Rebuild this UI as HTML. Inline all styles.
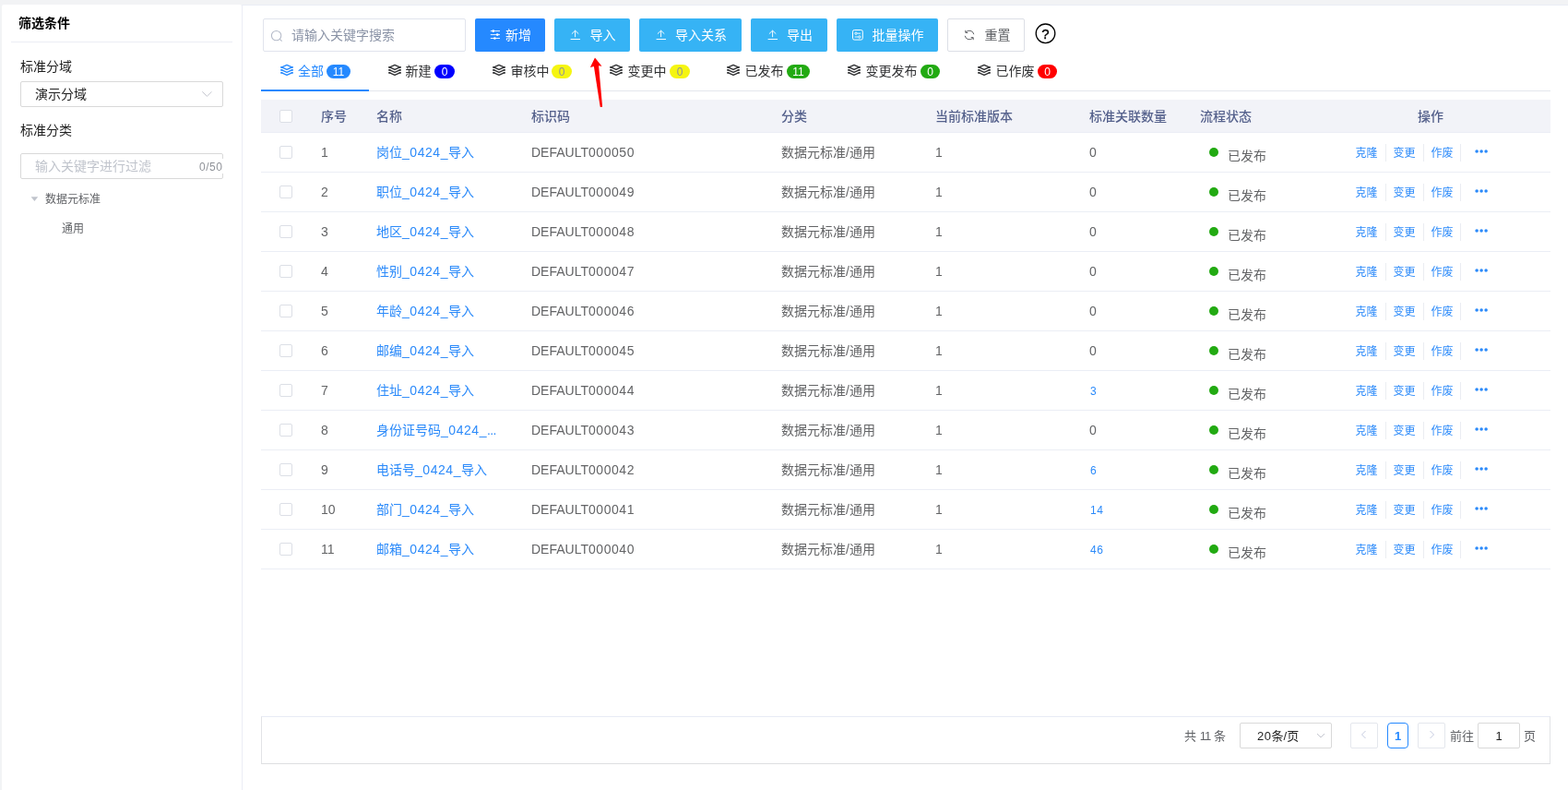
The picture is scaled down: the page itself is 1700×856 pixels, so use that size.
<!DOCTYPE html>
<html lang="zh-CN">
<head>
<meta charset="utf-8">
<title>数据元标准</title>
<style>
*{box-sizing:border-box;margin:0;padding:0}
html,body{width:1700px;height:856px;overflow:hidden;background:#f2f3f5}
body{font-family:"Liberation Sans","Noto Sans CJK SC",sans-serif;font-size:14px;color:#636466;position:relative}
#wrap{position:absolute;left:0;top:0;width:1700px;height:856px;will-change:transform}
.abs{position:absolute}
#left{position:absolute;left:2px;top:5px;width:260px;height:851px;background:#fff;border-radius:2px 2px 0 0}
#main{position:absolute;left:262px;top:5px;width:1438px;height:851px;background:#fff;border-left:1px solid #ebedf5;border-top:1px solid #ebedf5}
.t{position:absolute;white-space:nowrap;line-height:20px}
.d{letter-spacing:.55px}
.btn{position:absolute;top:20px;height:36px;border-radius:2px;color:#fff;font-size:14px;line-height:36px;white-space:nowrap}
.btn .lb{position:absolute;top:0;line-height:36px}
.btn svg{position:absolute}
.b1{background:#2589ff}
.b2{background:#36b3f5}
.b3{background:#fff;border:1px solid #dcdfe6;color:#606266}
.tab{position:absolute;top:67px;line-height:20px;font-size:14px;color:#303133;white-space:nowrap}
.tab.on{color:#2589ff}
.bdg{position:absolute;top:70px;height:15px;border-radius:8px;color:#fff;font-size:12px;line-height:17px;text-align:center;white-space:nowrap}
.lay{position:absolute}
#tbl{position:absolute;left:283px;top:108px;width:1398px}
#th{position:relative;height:36px;background:#f2f3f8;border-bottom:1px solid #ebeef5;color:#55618c;font-weight:500}
.tr{position:relative;height:43px;border-bottom:1px solid #ebeef5;background:#fff}
.c{position:absolute;top:0;line-height:42px;white-space:nowrap;font-size:14px}
#th .c{top:1px;line-height:35px}
.cb{position:absolute;left:20px;width:14px;height:14px;border:1px solid #dcdfe6;border-radius:2px;background:#fff}
.lk{color:#2b8afa}
.sm{font-size:12px}
.dot{position:absolute;left:1028px;top:16px;width:10px;height:10px;border-radius:50%;background:#22aa12}
.dv{position:absolute;top:12px;width:1px;height:19px;background:#ebedf2}
.a{top:1px;margin-left:-.5px}
</style>
</head>
<body>
<div id="wrap">
<div id="left"></div>
<div id="main"></div>
<!--LEFT-->
<div class="t" style="left:20px;top:15px;font-weight:bold;color:#000;font-size:14px">筛选条件</div>
<div class="abs" style="left:12px;top:45px;width:240px;height:1px;background:#ebedf5"></div>
<div class="t" style="left:22px;top:62px;color:#1f1f1f">标准分域</div>
<div class="abs" style="left:22px;top:88px;width:220px;height:28px;border:1px solid #d9d9d9;border-radius:2px;background:#fff"></div>
<div class="t" style="left:38px;top:92px;color:#1f1f1f">演示分域</div>
<svg class="abs" style="left:218px;top:97px" width="13" height="10" viewBox="0 0 13 10"><path d="M1.3 2.3 L6.4 7.3 L11.5 2.3" fill="none" stroke="#c4c6cf" stroke-width="1"/></svg>
<div class="t" style="left:22px;top:131px;color:#1f1f1f">标准分类</div>
<div class="abs" style="left:22px;top:166px;width:220px;height:28px;border:1px solid #d9d9d9;border-radius:2px;background:#fff"></div>
<div class="t" style="left:38px;top:170px;color:#c0c4cc">输入关键字进行过滤</div>
<div class="t" style="left:214px;top:172px;width:28px;height:16px;padding-left:2px;line-height:18px;background:#fff;color:#909399;font-size:12px;letter-spacing:.55px;overflow:hidden">0/50</div>
<svg class="abs" style="left:33px;top:213px" width="9" height="6" viewBox="0 0 9 6"><path d="M0.6 0.3 L8.2 0.3 L4.4 5 Z" fill="#c0c4cc"/></svg>
<div class="t" style="left:49px;top:206px;color:#606266;font-size:12px">数据元标准</div>
<div class="t" style="left:67px;top:238px;color:#606266;font-size:12px">通用</div>

<!--TOOLBAR-->
<div class="abs" style="left:285px;top:20px;width:220px;height:36px;border:1px solid #e1e4ed;border-radius:2px;background:#fff"></div>
<svg class="abs" style="left:293px;top:31.6px" width="14" height="14" viewBox="0 0 14 14"><circle cx="6.6" cy="6.6" r="5.2" fill="none" stroke="#b4bac8" stroke-width="1.05"/><path d="M10.4 10.4 L12.6 12.6" stroke="#b4bac8" stroke-width="1.05" fill="none"/></svg>
<div class="t" style="left:316px;top:28px;color:#8a93a6">请输入关键字搜索</div>
<div class="btn b1" style="left:515px;width:76px"><svg style="left:16px;top:11px" width="12" height="14" viewBox="0 0 12 14"><g stroke="#fff" stroke-width="0.9" fill="none"><path d="M0.8 2.6H11M0.8 6.6H11M0.8 10.5H11"/></g><g fill="#fff"><circle cx="3.8" cy="2.6" r="1.3"/><circle cx="8.2" cy="6.6" r="1.3"/><circle cx="5.4" cy="10.5" r="1.3"/></g></svg><span class="lb" style="left:33px">新增</span></div>
<div class="btn b2" style="left:601px;width:82px"><svg style="left:17px;top:12px" width="12" height="12" viewBox="0 0 12 12"><path d="M5.6 8.2V1.3M1.9 4.7L5.6 1.1L9.3 4.7M0.6 10.5H11" stroke="#fff" stroke-width="0.95" fill="none"/></svg><span class="lb" style="left:38.4px">导入</span></div>
<div class="btn b2" style="left:693px;width:111px"><svg style="left:18px;top:12px" width="12" height="12" viewBox="0 0 12 12"><path d="M5.6 8.2V1.3M1.9 4.7L5.6 1.1L9.3 4.7M0.6 10.5H11" stroke="#fff" stroke-width="0.95" fill="none"/></svg><span class="lb" style="left:39px">导入关系</span></div>
<div class="btn b2" style="left:814px;width:83px"><svg style="left:18px;top:12px" width="12" height="12" viewBox="0 0 12 12"><path d="M5.6 8.2V1.3M1.9 4.7L5.6 1.1L9.3 4.7M0.6 10.5H11" stroke="#fff" stroke-width="0.95" fill="none"/></svg><span class="lb" style="left:39px">导出</span></div>
<div class="btn b2" style="left:907px;width:110px"><svg style="left:17px;top:12px" width="12" height="12" viewBox="0 0 12 12"><rect x="0.5" y="0.5" width="10.8" height="10.6" rx="1.8" fill="none" stroke="#fff" stroke-width="1"/><circle cx="4" cy="4.2" r="1.2" fill="none" stroke="#fff" stroke-width="0.9"/><path d="M5.4 4.2h3.6M2.6 8h3.6" stroke="#fff" stroke-width="0.9"/><circle cx="7.8" cy="8" r="1.2" fill="none" stroke="#fff" stroke-width="0.9"/></svg><span class="lb" style="left:38.4px">批量操作</span></div>
<div class="btn b3" style="left:1027px;width:84px"><svg style="left:17px;top:10.8px" width="12" height="12" viewBox="0 0 12 12"><g transform="translate(12,0) scale(-1,1)"><path d="M1.2 5.2A4.9 4.9 0 0 1 10 3.2M10.8 6.8A4.9 4.9 0 0 1 2 8.8" stroke="#606266" stroke-width="1" fill="none"/><path d="M10.2 0.8V3.4H7.6M1.8 11.2V8.6H4.4" stroke="#606266" stroke-width="1" fill="none"/></g></svg><span class="lb" style="left:39.5px;line-height:34px">重置</span></div>
<svg class="abs" style="left:1121px;top:24px" width="25" height="25" viewBox="0 0 25 25"><circle cx="12.5" cy="12.3" r="10.3" fill="#fff" stroke="#000" stroke-width="1.3"/><text x="12.5" y="17.8" text-anchor="middle" font-family="Liberation Sans, sans-serif" font-size="15" fill="#000" stroke="#000" stroke-width="0.35">?</text></svg>

<!--TABS-->
<div class="abs" style="left:283px;top:98px;width:1398px;height:1px;background:#e4e7ed"></div>
<div class="abs" style="left:283px;top:97px;width:117px;height:2px;background:#2589ff"></div>
<svg class="lay" style="left:304px;top:69.3px" width="14" height="14" viewBox="0 0 14 14"><g fill="none" stroke="#2589ff" stroke-linejoin="round"><path stroke-width="1.3" d="M1.5 3.9L7 1.3L12.5 3.9L7 6.3ZM1.5 6.9L7 9.3L12.5 6.9M1.5 9.9L7 12.4L12.5 9.9"/><path stroke-width="1.7" d="M0.2 3.9H2.3M11.7 3.9H13.8M0.2 6.9H2.3M11.7 6.9H13.8M0.2 9.9H2.3M11.7 9.9H13.8"/></g></svg>
<div class="tab on" style="left:323px">全部</div><div class="bdg" style="left:354px;width:26px;background:#2589ff;color:#fff">11</div>
<svg class="lay" style="left:421px;top:69.3px" width="14" height="14" viewBox="0 0 14 14"><g fill="none" stroke="#303133" stroke-linejoin="round"><path stroke-width="1.3" d="M1.5 3.9L7 1.3L12.5 3.9L7 6.3ZM1.5 6.9L7 9.3L12.5 6.9M1.5 9.9L7 12.4L12.5 9.9"/><path stroke-width="1.7" d="M0.2 3.9H2.3M11.7 3.9H13.8M0.2 6.9H2.3M11.7 6.9H13.8M0.2 9.9H2.3M11.7 9.9H13.8"/></g></svg>
<div class="tab" style="left:439.4px">新建</div><div class="bdg" style="left:471px;width:22px;background:#0000ff;color:#fff">0</div>
<svg class="lay" style="left:534px;top:69.3px" width="14" height="14" viewBox="0 0 14 14"><g fill="none" stroke="#303133" stroke-linejoin="round"><path stroke-width="1.3" d="M1.5 3.9L7 1.3L12.5 3.9L7 6.3ZM1.5 6.9L7 9.3L12.5 6.9M1.5 9.9L7 12.4L12.5 9.9"/><path stroke-width="1.7" d="M0.2 3.9H2.3M11.7 3.9H13.8M0.2 6.9H2.3M11.7 6.9H13.8M0.2 9.9H2.3M11.7 9.9H13.8"/></g></svg>
<div class="tab" style="left:553.4px">审核中</div><div class="bdg" style="left:598px;width:22px;background:#f5f511;color:#909399">0</div>
<svg class="lay" style="left:661px;top:69.3px" width="14" height="14" viewBox="0 0 14 14"><g fill="none" stroke="#303133" stroke-linejoin="round"><path stroke-width="1.3" d="M1.5 3.9L7 1.3L12.5 3.9L7 6.3ZM1.5 6.9L7 9.3L12.5 6.9M1.5 9.9L7 12.4L12.5 9.9"/><path stroke-width="1.7" d="M0.2 3.9H2.3M11.7 3.9H13.8M0.2 6.9H2.3M11.7 6.9H13.8M0.2 9.9H2.3M11.7 9.9H13.8"/></g></svg>
<div class="tab" style="left:680.4px">变更中</div><div class="bdg" style="left:726px;width:22px;background:#f5f511;color:#909399">0</div>
<svg class="lay" style="left:788px;top:69.3px" width="14" height="14" viewBox="0 0 14 14"><g fill="none" stroke="#303133" stroke-linejoin="round"><path stroke-width="1.3" d="M1.5 3.9L7 1.3L12.5 3.9L7 6.3ZM1.5 6.9L7 9.3L12.5 6.9M1.5 9.9L7 12.4L12.5 9.9"/><path stroke-width="1.7" d="M0.2 3.9H2.3M11.7 3.9H13.8M0.2 6.9H2.3M11.7 6.9H13.8M0.2 9.9H2.3M11.7 9.9H13.8"/></g></svg>
<div class="tab" style="left:807.4px">已发布</div><div class="bdg" style="left:853px;width:25px;background:#22aa12;color:#fff">11</div>
<svg class="lay" style="left:919px;top:69.3px" width="14" height="14" viewBox="0 0 14 14"><g fill="none" stroke="#303133" stroke-linejoin="round"><path stroke-width="1.3" d="M1.5 3.9L7 1.3L12.5 3.9L7 6.3ZM1.5 6.9L7 9.3L12.5 6.9M1.5 9.9L7 12.4L12.5 9.9"/><path stroke-width="1.7" d="M0.2 3.9H2.3M11.7 3.9H13.8M0.2 6.9H2.3M11.7 6.9H13.8M0.2 9.9H2.3M11.7 9.9H13.8"/></g></svg>
<div class="tab" style="left:938.4px">变更发布</div><div class="bdg" style="left:998px;width:21px;background:#22aa12;color:#fff">0</div>
<svg class="lay" style="left:1060px;top:69.3px" width="14" height="14" viewBox="0 0 14 14"><g fill="none" stroke="#303133" stroke-linejoin="round"><path stroke-width="1.3" d="M1.5 3.9L7 1.3L12.5 3.9L7 6.3ZM1.5 6.9L7 9.3L12.5 6.9M1.5 9.9L7 12.4L12.5 9.9"/><path stroke-width="1.7" d="M0.2 3.9H2.3M11.7 3.9H13.8M0.2 6.9H2.3M11.7 6.9H13.8M0.2 9.9H2.3M11.7 9.9H13.8"/></g></svg>
<div class="tab" style="left:1079.4px">已作废</div><div class="bdg" style="left:1125px;width:21px;background:#ff0000;color:#fff">0</div>

<!--TABLE-->
<div id="tbl">
<div id="th"><span class="cb" style="top:11px"></span><span class="c" style="left:65px">序号</span><span class="c" style="left:125px">名称</span><span class="c" style="left:293px">标识码</span><span class="c" style="left:564px">分类</span><span class="c" style="left:731px">当前标准版本</span><span class="c" style="left:898px">标准关联数量</span><span class="c" style="left:1018px">流程状态</span><span class="c" style="left:1254px">操作</span></div>
<div class="tr"><span class="cb" style="top:14px"></span><span class="c" style="left:65px">1</span><span class="c lk" style="left:125px">岗位<span class="d">_0424_</span>导入</span><span class="c" style="left:293px">DEFAULT<span class="d">000050</span></span><span class="c" style="left:564px">数据元标准/通用</span><span class="c" style="left:731px">1</span><span class="c" style="left:898px">0</span><i class="dot"></i><span class="c" style="left:1048px;top:4px">已发布</span><span class="c lk sm a" style="left:1187px">克隆</span><i class="dv" style="left:1219px"></i><span class="c lk sm a" style="left:1228px">变更</span><i class="dv" style="left:1260px"></i><span class="c lk sm a" style="left:1269px">作废</span><i class="dv" style="left:1300px"></i><svg class="abs" style="left:1315px;top:17.3px" width="16" height="6" viewBox="0 0 16 6"><g fill="#2b8afa"><circle cx="3.1" cy="3" r="1.8"/><circle cx="8.1" cy="3" r="1.8"/><circle cx="13.1" cy="3" r="1.8"/></g></svg></div>
<div class="tr"><span class="cb" style="top:14px"></span><span class="c" style="left:65px">2</span><span class="c lk" style="left:125px">职位<span class="d">_0424_</span>导入</span><span class="c" style="left:293px">DEFAULT<span class="d">000049</span></span><span class="c" style="left:564px">数据元标准/通用</span><span class="c" style="left:731px">1</span><span class="c" style="left:898px">0</span><i class="dot"></i><span class="c" style="left:1048px;top:4px">已发布</span><span class="c lk sm a" style="left:1187px">克隆</span><i class="dv" style="left:1219px"></i><span class="c lk sm a" style="left:1228px">变更</span><i class="dv" style="left:1260px"></i><span class="c lk sm a" style="left:1269px">作废</span><i class="dv" style="left:1300px"></i><svg class="abs" style="left:1315px;top:17.3px" width="16" height="6" viewBox="0 0 16 6"><g fill="#2b8afa"><circle cx="3.1" cy="3" r="1.8"/><circle cx="8.1" cy="3" r="1.8"/><circle cx="13.1" cy="3" r="1.8"/></g></svg></div>
<div class="tr"><span class="cb" style="top:14px"></span><span class="c" style="left:65px">3</span><span class="c lk" style="left:125px">地区<span class="d">_0424_</span>导入</span><span class="c" style="left:293px">DEFAULT<span class="d">000048</span></span><span class="c" style="left:564px">数据元标准/通用</span><span class="c" style="left:731px">1</span><span class="c" style="left:898px">0</span><i class="dot"></i><span class="c" style="left:1048px;top:4px">已发布</span><span class="c lk sm a" style="left:1187px">克隆</span><i class="dv" style="left:1219px"></i><span class="c lk sm a" style="left:1228px">变更</span><i class="dv" style="left:1260px"></i><span class="c lk sm a" style="left:1269px">作废</span><i class="dv" style="left:1300px"></i><svg class="abs" style="left:1315px;top:17.3px" width="16" height="6" viewBox="0 0 16 6"><g fill="#2b8afa"><circle cx="3.1" cy="3" r="1.8"/><circle cx="8.1" cy="3" r="1.8"/><circle cx="13.1" cy="3" r="1.8"/></g></svg></div>
<div class="tr"><span class="cb" style="top:14px"></span><span class="c" style="left:65px">4</span><span class="c lk" style="left:125px">性别<span class="d">_0424_</span>导入</span><span class="c" style="left:293px">DEFAULT<span class="d">000047</span></span><span class="c" style="left:564px">数据元标准/通用</span><span class="c" style="left:731px">1</span><span class="c" style="left:898px">0</span><i class="dot"></i><span class="c" style="left:1048px;top:4px">已发布</span><span class="c lk sm a" style="left:1187px">克隆</span><i class="dv" style="left:1219px"></i><span class="c lk sm a" style="left:1228px">变更</span><i class="dv" style="left:1260px"></i><span class="c lk sm a" style="left:1269px">作废</span><i class="dv" style="left:1300px"></i><svg class="abs" style="left:1315px;top:17.3px" width="16" height="6" viewBox="0 0 16 6"><g fill="#2b8afa"><circle cx="3.1" cy="3" r="1.8"/><circle cx="8.1" cy="3" r="1.8"/><circle cx="13.1" cy="3" r="1.8"/></g></svg></div>
<div class="tr"><span class="cb" style="top:14px"></span><span class="c" style="left:65px">5</span><span class="c lk" style="left:125px">年龄<span class="d">_0424_</span>导入</span><span class="c" style="left:293px">DEFAULT<span class="d">000046</span></span><span class="c" style="left:564px">数据元标准/通用</span><span class="c" style="left:731px">1</span><span class="c" style="left:898px">0</span><i class="dot"></i><span class="c" style="left:1048px;top:4px">已发布</span><span class="c lk sm a" style="left:1187px">克隆</span><i class="dv" style="left:1219px"></i><span class="c lk sm a" style="left:1228px">变更</span><i class="dv" style="left:1260px"></i><span class="c lk sm a" style="left:1269px">作废</span><i class="dv" style="left:1300px"></i><svg class="abs" style="left:1315px;top:17.3px" width="16" height="6" viewBox="0 0 16 6"><g fill="#2b8afa"><circle cx="3.1" cy="3" r="1.8"/><circle cx="8.1" cy="3" r="1.8"/><circle cx="13.1" cy="3" r="1.8"/></g></svg></div>
<div class="tr"><span class="cb" style="top:14px"></span><span class="c" style="left:65px">6</span><span class="c lk" style="left:125px">邮编<span class="d">_0424_</span>导入</span><span class="c" style="left:293px">DEFAULT<span class="d">000045</span></span><span class="c" style="left:564px">数据元标准/通用</span><span class="c" style="left:731px">1</span><span class="c" style="left:898px">0</span><i class="dot"></i><span class="c" style="left:1048px;top:4px">已发布</span><span class="c lk sm a" style="left:1187px">克隆</span><i class="dv" style="left:1219px"></i><span class="c lk sm a" style="left:1228px">变更</span><i class="dv" style="left:1260px"></i><span class="c lk sm a" style="left:1269px">作废</span><i class="dv" style="left:1300px"></i><svg class="abs" style="left:1315px;top:17.3px" width="16" height="6" viewBox="0 0 16 6"><g fill="#2b8afa"><circle cx="3.1" cy="3" r="1.8"/><circle cx="8.1" cy="3" r="1.8"/><circle cx="13.1" cy="3" r="1.8"/></g></svg></div>
<div class="tr"><span class="cb" style="top:14px"></span><span class="c" style="left:65px">7</span><span class="c lk" style="left:125px">住址<span class="d">_0424_</span>导入</span><span class="c" style="left:293px">DEFAULT<span class="d">000044</span></span><span class="c" style="left:564px">数据元标准/通用</span><span class="c" style="left:731px">1</span><span class="c lk sm d" style="left:899px;top:1px">3</span><i class="dot"></i><span class="c" style="left:1048px;top:4px">已发布</span><span class="c lk sm a" style="left:1187px">克隆</span><i class="dv" style="left:1219px"></i><span class="c lk sm a" style="left:1228px">变更</span><i class="dv" style="left:1260px"></i><span class="c lk sm a" style="left:1269px">作废</span><i class="dv" style="left:1300px"></i><svg class="abs" style="left:1315px;top:17.3px" width="16" height="6" viewBox="0 0 16 6"><g fill="#2b8afa"><circle cx="3.1" cy="3" r="1.8"/><circle cx="8.1" cy="3" r="1.8"/><circle cx="13.1" cy="3" r="1.8"/></g></svg></div>
<div class="tr"><span class="cb" style="top:14px"></span><span class="c" style="left:65px">8</span><span class="c lk" style="left:125px">身份证号码<span class="d">_0424_</span><span style="letter-spacing:-.6px">...</span></span><span class="c" style="left:293px">DEFAULT<span class="d">000043</span></span><span class="c" style="left:564px">数据元标准/通用</span><span class="c" style="left:731px">1</span><span class="c" style="left:898px">0</span><i class="dot"></i><span class="c" style="left:1048px;top:4px">已发布</span><span class="c lk sm a" style="left:1187px">克隆</span><i class="dv" style="left:1219px"></i><span class="c lk sm a" style="left:1228px">变更</span><i class="dv" style="left:1260px"></i><span class="c lk sm a" style="left:1269px">作废</span><i class="dv" style="left:1300px"></i><svg class="abs" style="left:1315px;top:17.3px" width="16" height="6" viewBox="0 0 16 6"><g fill="#2b8afa"><circle cx="3.1" cy="3" r="1.8"/><circle cx="8.1" cy="3" r="1.8"/><circle cx="13.1" cy="3" r="1.8"/></g></svg></div>
<div class="tr"><span class="cb" style="top:14px"></span><span class="c" style="left:65px">9</span><span class="c lk" style="left:125px">电话号<span class="d">_0424_</span>导入</span><span class="c" style="left:293px">DEFAULT<span class="d">000042</span></span><span class="c" style="left:564px">数据元标准/通用</span><span class="c" style="left:731px">1</span><span class="c lk sm d" style="left:899px;top:1px">6</span><i class="dot"></i><span class="c" style="left:1048px;top:4px">已发布</span><span class="c lk sm a" style="left:1187px">克隆</span><i class="dv" style="left:1219px"></i><span class="c lk sm a" style="left:1228px">变更</span><i class="dv" style="left:1260px"></i><span class="c lk sm a" style="left:1269px">作废</span><i class="dv" style="left:1300px"></i><svg class="abs" style="left:1315px;top:17.3px" width="16" height="6" viewBox="0 0 16 6"><g fill="#2b8afa"><circle cx="3.1" cy="3" r="1.8"/><circle cx="8.1" cy="3" r="1.8"/><circle cx="13.1" cy="3" r="1.8"/></g></svg></div>
<div class="tr"><span class="cb" style="top:14px"></span><span class="c" style="left:65px">10</span><span class="c lk" style="left:125px">部门<span class="d">_0424_</span>导入</span><span class="c" style="left:293px">DEFAULT<span class="d">000041</span></span><span class="c" style="left:564px">数据元标准/通用</span><span class="c" style="left:731px">1</span><span class="c lk sm d" style="left:899px;top:1px">14</span><i class="dot"></i><span class="c" style="left:1048px;top:4px">已发布</span><span class="c lk sm a" style="left:1187px">克隆</span><i class="dv" style="left:1219px"></i><span class="c lk sm a" style="left:1228px">变更</span><i class="dv" style="left:1260px"></i><span class="c lk sm a" style="left:1269px">作废</span><i class="dv" style="left:1300px"></i><svg class="abs" style="left:1315px;top:17.3px" width="16" height="6" viewBox="0 0 16 6"><g fill="#2b8afa"><circle cx="3.1" cy="3" r="1.8"/><circle cx="8.1" cy="3" r="1.8"/><circle cx="13.1" cy="3" r="1.8"/></g></svg></div>
<div class="tr"><span class="cb" style="top:14px"></span><span class="c" style="left:65px">11</span><span class="c lk" style="left:125px">邮箱<span class="d">_0424_</span>导入</span><span class="c" style="left:293px">DEFAULT<span class="d">000040</span></span><span class="c" style="left:564px">数据元标准/通用</span><span class="c" style="left:731px">1</span><span class="c lk sm d" style="left:899px;top:1px">46</span><i class="dot"></i><span class="c" style="left:1048px;top:4px">已发布</span><span class="c lk sm a" style="left:1187px">克隆</span><i class="dv" style="left:1219px"></i><span class="c lk sm a" style="left:1228px">变更</span><i class="dv" style="left:1260px"></i><span class="c lk sm a" style="left:1269px">作废</span><i class="dv" style="left:1300px"></i><svg class="abs" style="left:1315px;top:17.3px" width="16" height="6" viewBox="0 0 16 6"><g fill="#2b8afa"><circle cx="3.1" cy="3" r="1.8"/><circle cx="8.1" cy="3" r="1.8"/><circle cx="13.1" cy="3" r="1.8"/></g></svg></div>
</div>

<!--ARROW--><svg class="abs" style="left:636px;top:58px;z-index:5" width="24" height="62" viewBox="636 58 24 62"><path d="M645 62.4 L639.9 72.9 L643.9 71.9 L650.7 115.7 Q651.9 116.4 653.1 115.5 L649.1 71.3 L652.5 71.8 Z" fill="#ff0000"/></svg>

<!--PAGER-->
<div class="abs" style="left:283px;top:776px;width:1398px;height:52px;border:1px solid #e2e3e6;border-top-color:#e8ebf5;border-bottom-color:#dddee1;background:#fff"></div>
<div class="t" style="left:1284px;top:788px;font-size:13px;color:#606266">共 <span style="letter-spacing:-.9px">11</span> 条</div>
<div class="abs" style="left:1344px;top:783px;width:100px;height:28px;border:1px solid #d9d9d9;border-radius:2px;background:#fff"></div>
<div class="t" style="left:1363px;top:788px;font-size:13px;color:#1f1f1f"><span class="d">20</span>条/页</div>
<svg class="abs" style="left:1425.5px;top:791.6px" width="12" height="10" viewBox="0 0 12 10"><path d="M2 3 L6 7 L10 3" fill="none" stroke="#c4c6cf" stroke-width="1"/></svg>
<div class="abs" style="left:1464px;top:783px;width:30px;height:28px;border:1px solid #e4e7ed;border-radius:2px;background:#fff"></div>
<svg class="abs" style="left:1473px;top:790.3px" width="12" height="12" viewBox="0 0 12 12"><path d="M7.5 2 L3.5 6 L7.5 10" fill="none" stroke="#c5cbe0" stroke-width="1"/></svg>
<div class="abs" style="left:1504px;top:783px;width:23px;height:28px;border:1px solid #2589ff;border-radius:4px;background:#fff"></div>
<div class="t" style="left:1504px;top:788px;width:23px;text-align:center;font-size:13px;font-weight:bold;color:#2589ff">1</div>
<div class="abs" style="left:1537px;top:783px;width:30px;height:28px;border:1px solid #e4e7ed;border-radius:2px;background:#fff"></div>
<svg class="abs" style="left:1546px;top:790.3px" width="12" height="12" viewBox="0 0 12 12"><path d="M4.5 2 L8.5 6 L4.5 10" fill="none" stroke="#c5cbe0" stroke-width="1"/></svg>
<div class="t" style="left:1572px;top:788px;font-size:13px;color:#606266">前往</div>
<div class="abs" style="left:1602px;top:783px;width:46px;height:28px;border:1px solid #d9d9d9;border-radius:2px;background:#fff"></div>
<div class="t" style="left:1602px;top:788px;width:46px;text-align:center;font-size:13px;color:#1f1f1f">1</div>
<div class="t" style="left:1652px;top:788px;font-size:13px;color:#606266">页</div>

</div>
</body>
</html>
